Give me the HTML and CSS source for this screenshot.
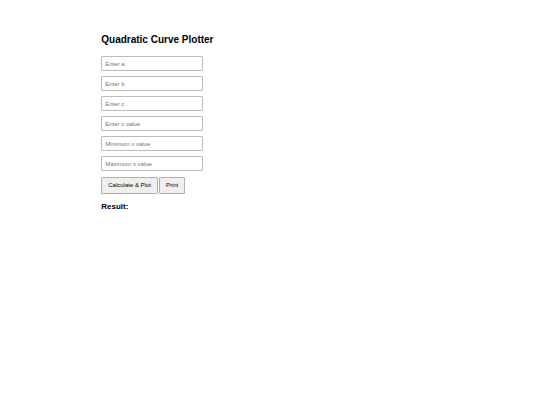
FILE: index.html
```
<!DOCTYPE html>
<html lang="en">
  <head>
    <meta charset="UTF-8" />
    <meta name="viewport" content="width=device-width, initial-scale=1.0" />
    <title>Quadratic Curve Plotter</title>
    <link rel="stylesheet" href="styles.css">
  </head>
  <body>
    <div class="container">
      <h2 class="title">Quadratic Curve Plotter</h2>
      <form class="plot_form">
        <input type="number" id="a" class="field" placeholder="Enter a" aria-label="Enter a" />
        <input type="number" id="b" class="field" placeholder="Enter b" aria-label="Enter b" />
        <input type="number" id="c" class="field" placeholder="Enter c" aria-label="Enter c" />
        <input type="number" id="x" class="field" placeholder="Enter x value" aria-label="Enter x value" />
        <input type="number" id="xMin" class="field" placeholder="Minimum x value" aria-label="Minimum x value" />
        <input type="number" id="xMax" class="field" placeholder="Maximum x value" aria-label="Maximum x value" />
        <div class="buttons">
          <button type="button" class="btn">Calculate &amp; Plot</button>
          <button type="button" class="btn">Print</button>
        </div>
      </form>
      <h3 class="result_title">Result:</h3>
      <div id="result"></div>
    </div>
  </body>
</html>
```
FILE: styles.css
```
body {
  margin: 0;
  background-color: #fff;
  color: #000;
  font-family: "Liberation Sans", Arial, sans-serif;
}

.container {
  width: 62.5%;
  margin: 34px auto 0;
}

.title {
  margin: 0 0 10px;
  font-size: 10px;
  line-height: 12px;
}

.plot_form {
  display: flex;
  flex-direction: column;
  align-items: flex-start;
  gap: 5px;
}

.field {
  box-sizing: border-box;
  width: 30%;
  height: 15px;
  padding: 0 3px;
  border: 1px solid #bbb;
  border-radius: 1px;
  font-family: inherit;
  font-size: 6px;
}

.field::placeholder {
  color: #757575;
}

/* buttons */
.buttons {
  display: flex;
  gap: 1px;
  margin-top: 1px;
}

.btn {
  padding: 4px 6px;
  border: 1px solid #b0b0b0;
  border-radius: 1px;
  background-color: #efefef;
  color: #000;
  font-family: inherit;
  font-size: 6px;
  line-height: 7px;
  cursor: pointer;
}

.result_title {
  margin: 8px 0;
  font-size: 8px;
  line-height: 9px;
}
```
